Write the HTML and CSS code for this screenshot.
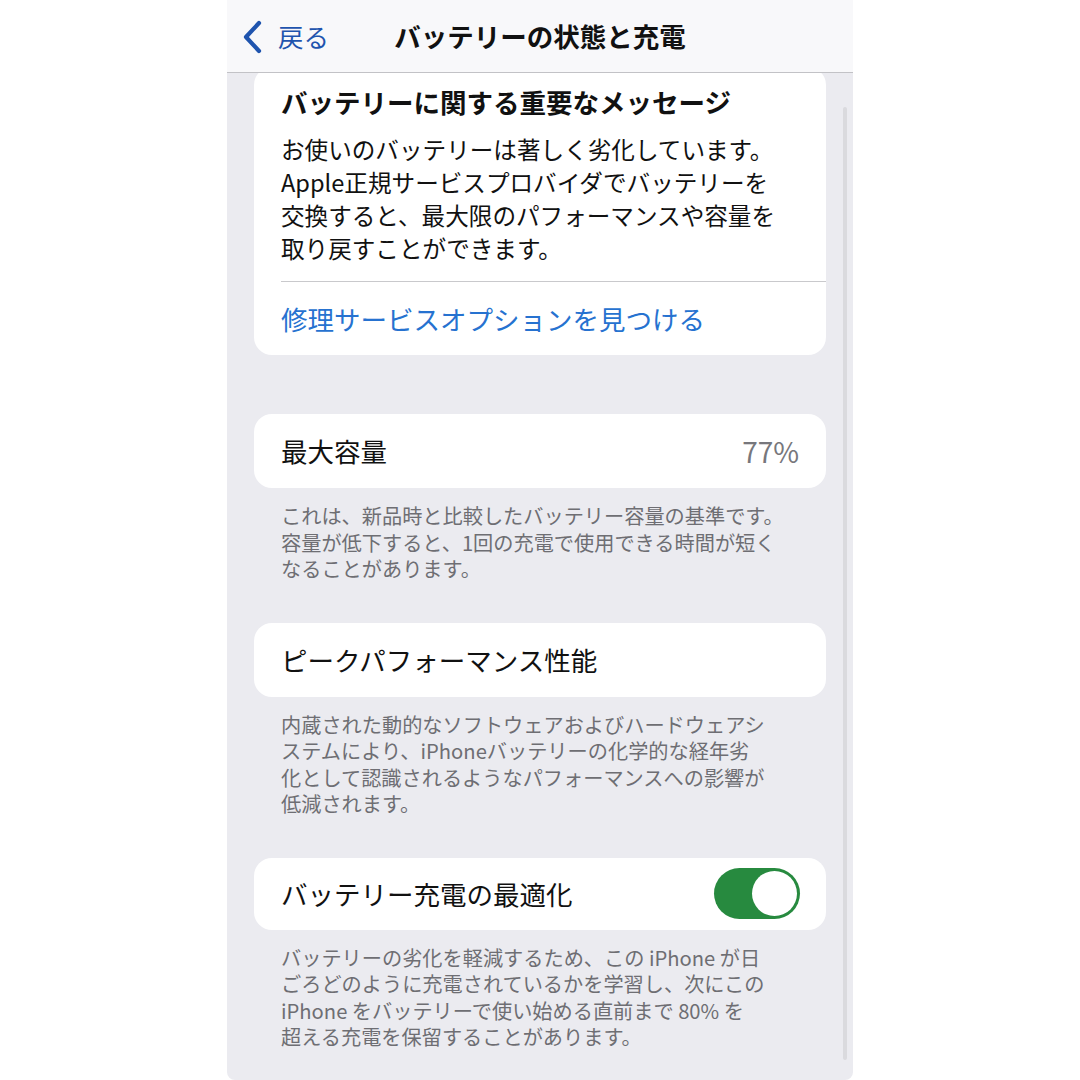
FILE: index.html
```html
<!DOCTYPE html>
<html lang="ja">
<head>
<meta charset="utf-8">
<title>バッテリーの状態と充電</title>
<link rel="stylesheet" href="styles.css">
</head>
<body>
<div class="phone">
  <header class="nav">
    <a class="back">
      <svg class="chev" width="22" height="34" viewBox="0 0 22 34"><path d="M18 3 L5 17 L18 31" fill="none" stroke="currentColor" stroke-width="4.2" stroke-linecap="round" stroke-linejoin="round"/></svg>
      <span>戻る</span>
    </a>
    <h1 class="nav-title">バッテリーの状態と充電</h1>
    <span></span>
  </header>
  <main class="content">
    <section class="card msg">
      <h2 class="msg-title">バッテリーに関する重要なメッセージ</h2>
      <p class="msg-body">お使いのバッテリーは著しく劣化しています。<br>Apple正規サービスプロバイダでバッテリーを<br>交換すると、最大限のパフォーマンスや容量を<br>取り戻すことができます。</p>
      <div class="divider"></div>
      <a class="link">修理サービスオプションを見つける</a>
    </section>

    <section class="group first">
      <div class="card row">
        <span class="label">最大容量</span>
        <span class="value">77%</span>
      </div>
      <p class="footer">これは、新品時と比較したバッテリー容量の基準です。<br>容量が低下すると、1回の充電で使用できる時間が短く<br>なることがあります。</p>
    </section>

    <section class="group">
      <div class="card row">
        <span class="label">ピークパフォーマンス性能</span>
      </div>
      <p class="footer">内蔵された動的なソフトウェアおよびハードウェアシ<br>ステムにより、iPhoneバッテリーの化学的な経年劣<br>化として認識されるようなパフォーマンスへの影響が<br>低減されます。</p>
    </section>

    <section class="group">
      <div class="card row toggle-row">
        <span class="label">バッテリー充電の最適化</span>
        <span class="switch"><span class="knob"></span></span>
      </div>
      <p class="footer">バッテリーの劣化を軽減するため、この iPhone が日<br>ごろどのように充電されているかを学習し、次にこの<br>iPhone をバッテリーで使い始める直前まで 80% を<br>超える充電を保留することがあります。</p>
    </section>
  </main>
  <div class="scrollbar"></div>
</div>
</body>
</html>
```
FILE: styles.css
```css
* { box-sizing: border-box; }
html, body { margin: 0; padding: 0; background: #ffffff; }
body {
  font-family: "Noto Sans CJK JP", "Noto Sans", sans-serif;
  color: #111111;
}
.phone {
  position: relative;
  width: 626px;
  height: 1080px;
  margin: 0 auto;
  background: #ebebf0;
  overflow: hidden;
  border-radius: 0 0 8px 8px;
}
.nav {
  position: relative;
  z-index: 2;
  height: 73px;
  background: #f8f8fa;
  border-bottom: 1px solid #c2c2c6;
  display: grid;
  grid-template-columns: 1fr auto 1fr;
  align-items: center;
}
.back {
  display: flex;
  align-items: center;
  gap: 15px;
  padding-left: 14px;
  color: #1f54ae;
  font-size: 25.5px;
  line-height: 1;
}
.chev { display: block; margin-top: 2px; }
.nav-title {
  margin: 0;
  font-size: 26.5px;
  font-weight: 700;
  color: #111;
  line-height: 1;
}
.content {
  margin-top: -6px;
  padding: 0 27px;
}
.card {
  background: #ffffff;
  border-radius: 18px;
}
.msg {
  padding: 18px 0 19px 27px;
}
.msg-title {
  margin: 0;
  font-size: 26.5px;
  line-height: 34px;
  font-weight: 700;
}
.msg-body {
  margin: 14px 0 0;
  font-size: 23.6px;
  line-height: 33px;
  white-space: nowrap;
}
.divider {
  margin-top: 16px;
  height: 1px;
  background: #c9c9cc;
}
.link {
  display: block;
  margin-top: 20px;
  font-size: 26.5px;
  line-height: 34px;
  color: #2672d0;
}
.group { margin-top: 40px; }
.group.first { margin-top: 59px; }
.row {
  height: 74px;
  display: flex;
  align-items: center;
  justify-content: space-between;
  padding: 0 27px;
}
.toggle-row { height: 72px; padding-right: 26px; }
.label { font-size: 26.5px; line-height: 34px; }
.value { font-size: 28px; line-height: 34px; color: #77777c; }
.footer {
  margin: 0;
  padding: 15px 27px 0;
  font-size: 20.2px;
  line-height: 26.5px;
  color: #6e6e73;
  white-space: nowrap;
}
.switch {
  width: 86px;
  height: 51px;
  border-radius: 26px;
  background: #278a3f;
  padding: 3px;
  display: flex;
  justify-content: flex-end;
}
.knob {
  width: 45px;
  height: 45px;
  border-radius: 50%;
  background: #ffffff;
}
.scrollbar {
  position: absolute;
  top: 107px;
  right: 6px;
  width: 4px;
  height: 953px;
  border-radius: 2px;
  background: #dadade;
}
```
